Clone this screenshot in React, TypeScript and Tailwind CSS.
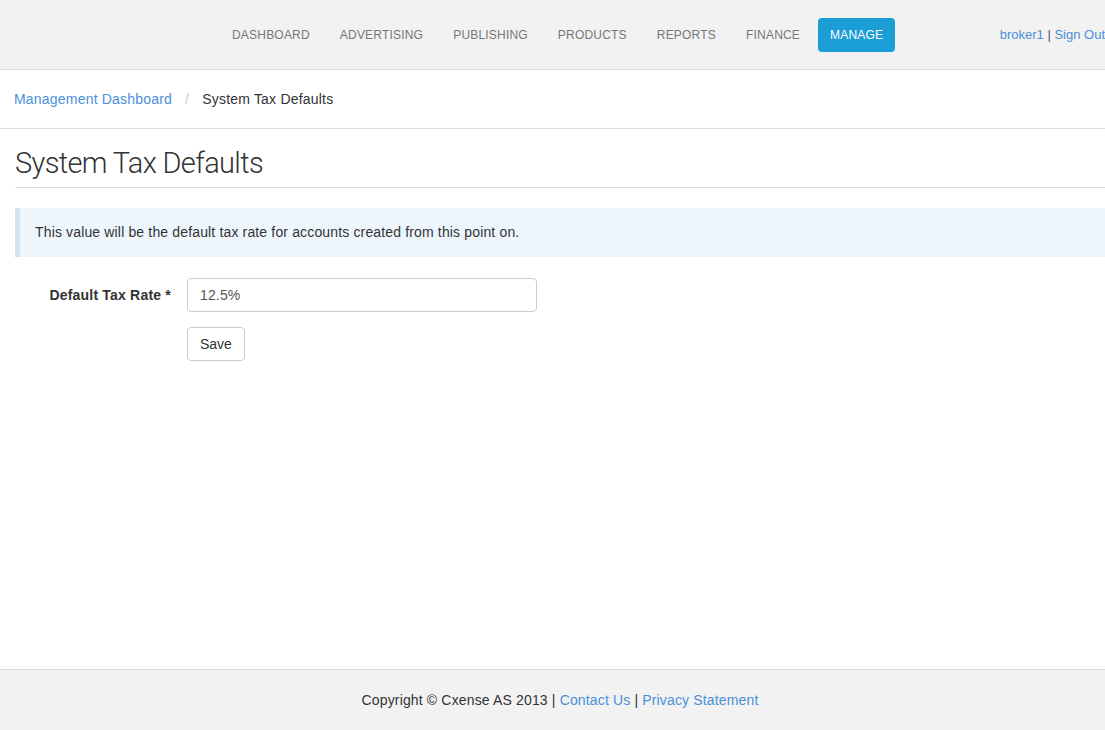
const navItems = ['DASHBOARD', 'ADVERTISING', 'PUBLISHING', 'PRODUCTS', 'REPORTS', 'FINANCE']

export default function App() {
  return (
    <div className="flex h-screen flex-col overflow-hidden bg-white font-['Liberation_Sans',Arial,sans-serif] text-[14px] tracking-[0.15px] text-[#333]">
      {/* Top bar */}
      <header className="flex h-[70px] shrink-0 items-center border-b border-[#dcdcdc] bg-[#f2f2f2]">
        <div className="w-[217px] shrink-0" />
        <nav className="flex items-center text-[12px] tracking-[0.2px] text-[#777]">
          {navItems.map((item) => (
            <a key={item} className="px-[15px] leading-[34px]">
              {item}
            </a>
          ))}
          <a className="ml-[3px] rounded-[4px] bg-[#1b9dd6] px-[12px] leading-[34px] text-white">MANAGE</a>
        </nav>
        <div className="ml-auto whitespace-nowrap text-[13px] tracking-normal text-[#4a90d9]">
          broker1 <span className="text-[#555]">|</span> Sign Out
        </div>
      </header>

      {/* Breadcrumb */}
      <div className="flex h-[59px] shrink-0 items-center border-b border-[#dcdcdc] px-[14px] tracking-[0.2px]">
        <a className="text-[#4a90d9]">Management Dashboard</a>
        <span className="px-[13px] text-[#ccc]">/</span>
        <span className="text-[#333]">System Tax Defaults</span>
      </div>

      <main className="flex-1 pl-[15px]">
        <h1 className="mt-[16px] border-b border-[#dcdcdc] pb-[6px] font-['Roboto',sans-serif] text-[29px] font-light leading-[36px] tracking-[-0.65px] text-[#333]">
          System Tax Defaults
        </h1>

        <div className="mt-[20px] border-l-[5px] border-[#cfe3f1] bg-[#eef6fd] px-[15px] py-[15px] leading-[19px]">
          This value will be the default tax rate for accounts created from this point on.
        </div>

        <div className="mt-[21px] flex items-center">
          <label className="w-[156px] text-right font-bold tracking-[0.2px]">Default Tax Rate *</label>
          <input
            className="ml-[16px] h-[34px] w-[350px] rounded-[4px] border border-[#ccc] px-[12px] text-[14px] text-[#555] outline-none"
            defaultValue="12.5%"
          />
        </div>
        <div className="mt-[15px] pl-[172px]">
          <button className="h-[34px] rounded-[4px] border border-[#ccc] bg-white px-[12px] text-[14px] tracking-normal text-[#333]">
            Save
          </button>
        </div>
      </main>

      {/* Footer */}
      <footer className="flex h-[61px] shrink-0 items-center justify-center border-t border-[#dcdcdc] bg-[#f2f2f2] pl-[15px]">
        <span>
          Copyright © Cxense AS 2013 | <a className="text-[#4a90d9]">Contact Us</a> |{' '}
          <a className="text-[#4a90d9]">Privacy Statement</a>
        </span>
      </footer>
    </div>
  )
}
